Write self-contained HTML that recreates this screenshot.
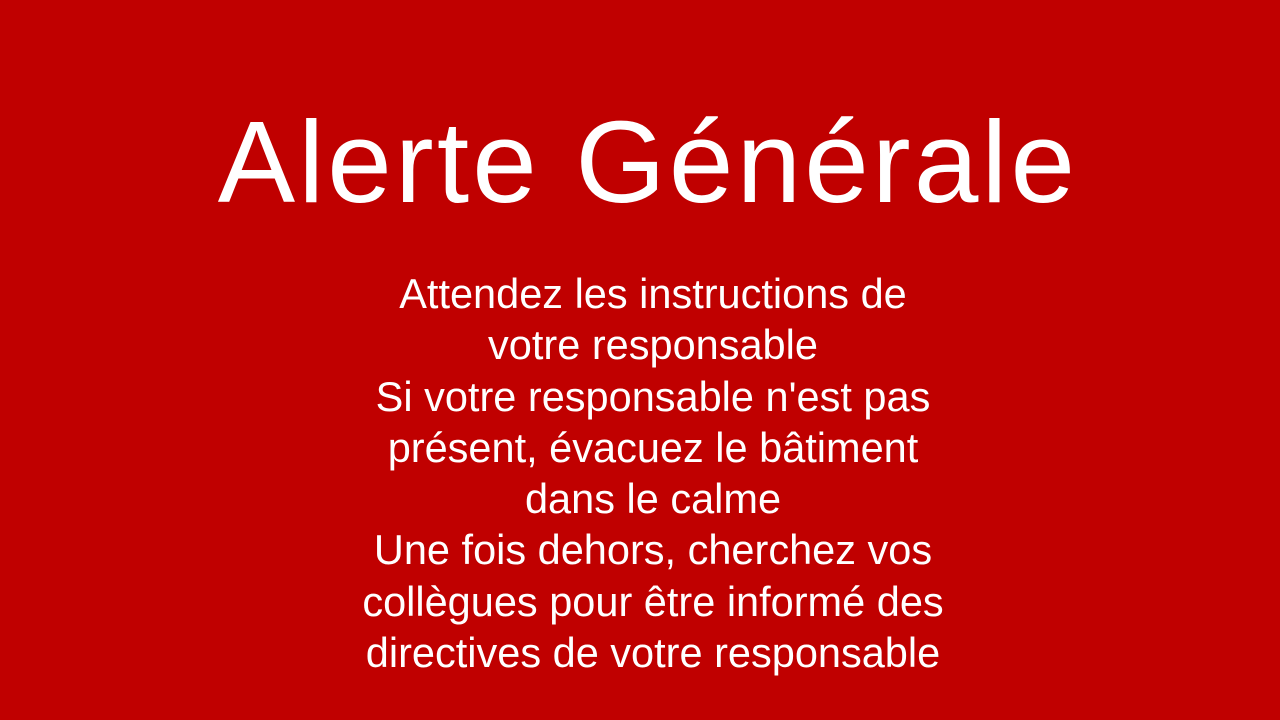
<!DOCTYPE html>
<html><head><meta charset="utf-8"><style>
html,body{margin:0;padding:0;}
body{width:1280px;height:720px;background:#C00000;position:relative;overflow:hidden;font-family:"Liberation Sans",sans-serif;color:#fff;}
.t{position:absolute;left:8px;width:1280px;top:94px;text-align:center;font-size:116px;line-height:136px;letter-spacing:3.2px;white-space:nowrap;}
.b{position:absolute;left:13px;width:1280px;top:268px;text-align:center;font-size:41.5px;line-height:51.3px;}
</style></head><body>
<div class="t">Alerte Générale</div>
<div class="b">Attendez les instructions de<br>votre responsable<br>Si votre responsable n'est pas<br>présent, évacuez le bâtiment<br>dans le calme<br>Une fois dehors, cherchez vos<br>collègues pour être informé des<br>directives de votre responsable</div>
</body></html>
